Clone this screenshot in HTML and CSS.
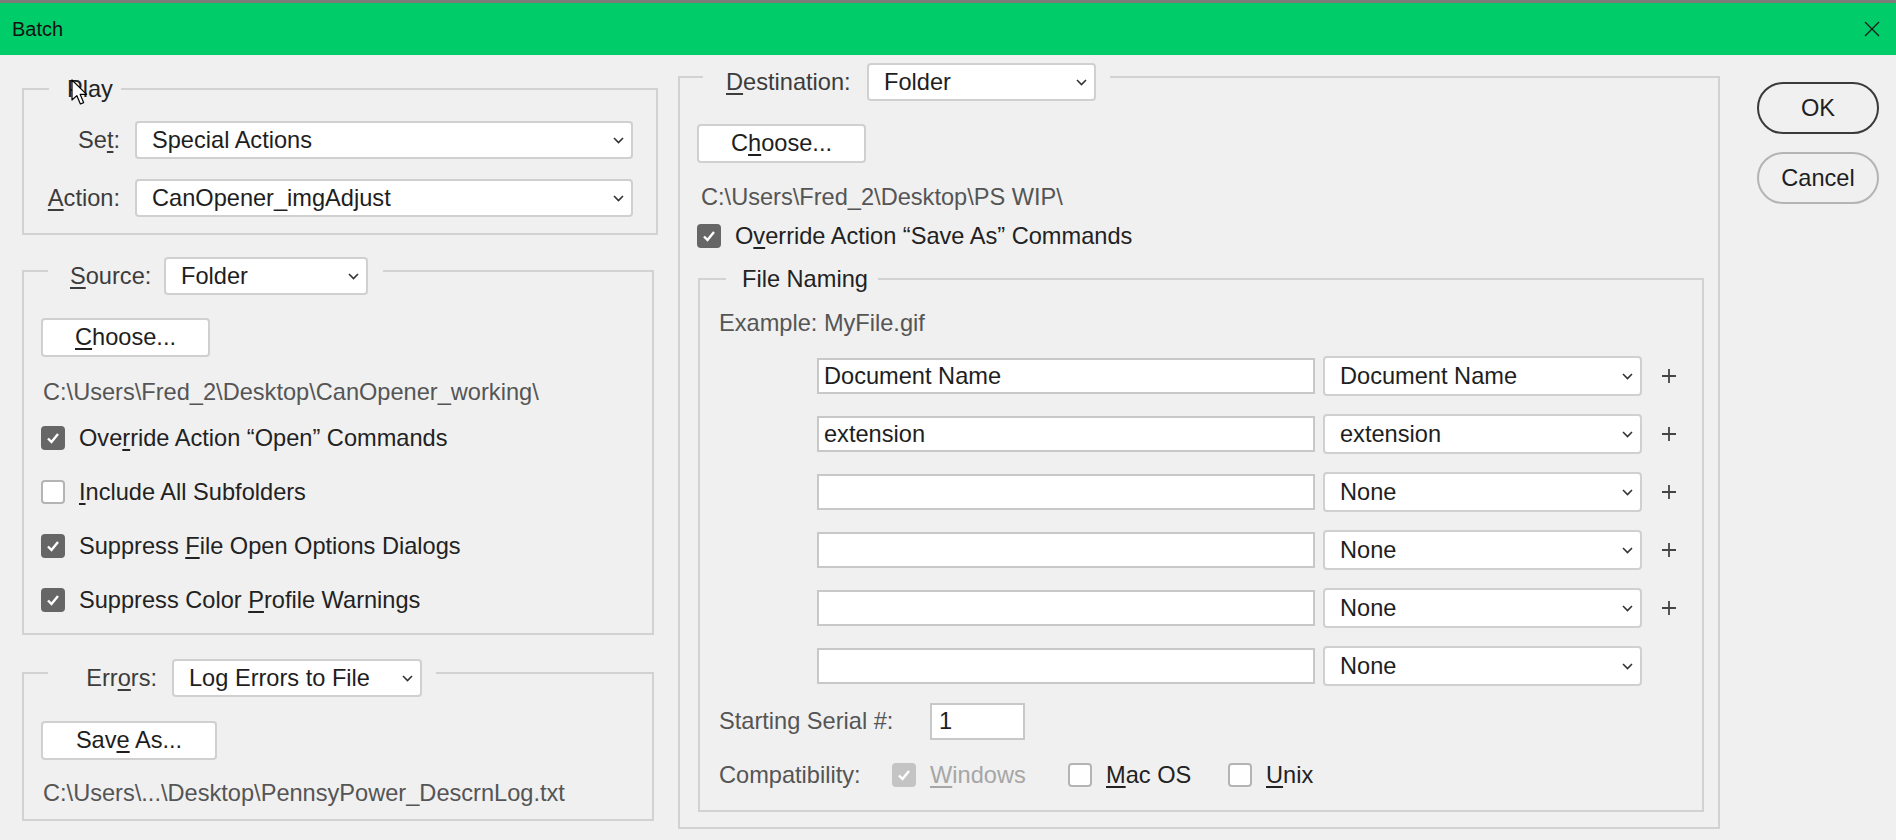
FILE: index.html
```html
<!DOCTYPE html>
<html>
<head>
<meta charset="utf-8">
<title>Batch</title>
<link rel="stylesheet" href="styles.css">
</head>
<body>
<div class="topstrip"></div>
<div class="titlebar">
  <span class="title">Batch</span>
  <svg class="close" width="16" height="16" viewBox="0 0 16 16"><path d="M1 1 L15 15 M15 1 L1 15" stroke="#1a1a1a" stroke-width="1.3" fill="none"/></svg>
</div>
<div class="main">
  <div class="col-left">
    <div class="group play">
      <div class="legend legend-text play-legend">Play</div>
      <div class="form-grid">
        <span class="lbl">Se<u>t</u>:</span>
        <div class="select w-set"><span>Special Actions</span><svg class="chev" width="11" height="7" viewBox="0 0 11 7"><polyline points="1,1 5.5,5.5 10,1" fill="none" stroke="#333" stroke-width="1.6"/></svg></div>
        <span class="lbl"><u>A</u>ction:</span>
        <div class="select w-set"><span>CanOpener_imgAdjust</span><svg class="chev" width="11" height="7" viewBox="0 0 11 7"><polyline points="1,1 5.5,5.5 10,1" fill="none" stroke="#333" stroke-width="1.6"/></svg></div>
      </div>
    </div>

    <div class="group source">
      <div class="legend legend-ctl source-legend">
        <span class="lbl lbl-source"><u>S</u>ource:</span>
        <div class="select w-source"><span>Folder</span><svg class="chev" width="11" height="7" viewBox="0 0 11 7"><polyline points="1,1 5.5,5.5 10,1" fill="none" stroke="#333" stroke-width="1.6"/></svg></div>
      </div>
      <div class="btn w-choose src-choose"><span><u>C</u>hoose...</span></div>
      <div class="path src-path">C:\Users\Fred_2\Desktop\CanOpener_working\</div>
      <div class="check-list">
        <div class="check-row"><span class="cb on"><svg width="14" height="12" viewBox="0 0 14 12"><polyline points="2,6.5 5.5,10 12,2" fill="none" stroke="#fff" stroke-width="2.4"/></svg></span><span class="ctext">Ove<u>r</u>ride Action “Open” Commands</span></div>
        <div class="check-row"><span class="cb off"></span><span class="ctext"><u>I</u>nclude All Subfolders</span></div>
        <div class="check-row"><span class="cb on"><svg width="14" height="12" viewBox="0 0 14 12"><polyline points="2,6.5 5.5,10 12,2" fill="none" stroke="#fff" stroke-width="2.4"/></svg></span><span class="ctext">Suppress <u>F</u>ile Open Options Dialogs</span></div>
        <div class="check-row"><span class="cb on"><svg width="14" height="12" viewBox="0 0 14 12"><polyline points="2,6.5 5.5,10 12,2" fill="none" stroke="#fff" stroke-width="2.4"/></svg></span><span class="ctext">Suppress Color <u>P</u>rofile Warnings</span></div>
      </div>
    </div>

    <div class="group errors">
      <div class="legend legend-ctl errors-legend">
        <span class="lbl lbl-errors">Err<u>o</u>rs:</span>
        <div class="select w-errors"><span>Log Errors to File</span><svg class="chev" width="11" height="7" viewBox="0 0 11 7"><polyline points="1,1 5.5,5.5 10,1" fill="none" stroke="#333" stroke-width="1.6"/></svg></div>
      </div>
      <div class="btn w-saveas err-save"><span>Sav<u>e</u> As...</span></div>
      <div class="path err-path">C:\Users\...\Desktop\PennsyPower_DescrnLog.txt</div>
    </div>
  </div>

  <div class="col-right">
    <div class="group dest">
      <div class="legend legend-ctl dest-legend">
        <span class="lbl lbl-dest"><u>D</u>estination:</span>
        <div class="select w-dest"><span>Folder</span><svg class="chev" width="11" height="7" viewBox="0 0 11 7"><polyline points="1,1 5.5,5.5 10,1" fill="none" stroke="#333" stroke-width="1.6"/></svg></div>
      </div>
      <div class="btn w-choose dest-choose"><span>C<u>h</u>oose...</span></div>
      <div class="path dest-path">C:\Users\Fred_2\Desktop\PS WIP\</div>
      <div class="check-row dest-check"><span class="cb on"><svg width="14" height="12" viewBox="0 0 14 12"><polyline points="2,6.5 5.5,10 12,2" fill="none" stroke="#fff" stroke-width="2.4"/></svg></span><span class="ctext">O<u>v</u>erride Action “Save As” Commands</span></div>

      <div class="group naming">
        <div class="legend legend-text naming-legend">File Naming</div>
        <div class="example">Example: MyFile.gif</div>
        <div class="name-rows">
          <div class="name-row">
            <div class="tinput">Document Name</div>
            <div class="select w-name"><span>Document Name</span><svg class="chev" width="11" height="7" viewBox="0 0 11 7"><polyline points="1,1 5.5,5.5 10,1" fill="none" stroke="#333" stroke-width="1.6"/></svg></div>
            <svg class="plus" width="16" height="16" viewBox="0 0 16 16"><path d="M8 1 V15 M1 8 H15" stroke="#444" stroke-width="1.8"/></svg>
          </div>
          <div class="name-row">
            <div class="tinput">extension</div>
            <div class="select w-name"><span>extension</span><svg class="chev" width="11" height="7" viewBox="0 0 11 7"><polyline points="1,1 5.5,5.5 10,1" fill="none" stroke="#333" stroke-width="1.6"/></svg></div>
            <svg class="plus" width="16" height="16" viewBox="0 0 16 16"><path d="M8 1 V15 M1 8 H15" stroke="#444" stroke-width="1.8"/></svg>
          </div>
          <div class="name-row">
            <div class="tinput"></div>
            <div class="select w-name"><span>None</span><svg class="chev" width="11" height="7" viewBox="0 0 11 7"><polyline points="1,1 5.5,5.5 10,1" fill="none" stroke="#333" stroke-width="1.6"/></svg></div>
            <svg class="plus" width="16" height="16" viewBox="0 0 16 16"><path d="M8 1 V15 M1 8 H15" stroke="#444" stroke-width="1.8"/></svg>
          </div>
          <div class="name-row">
            <div class="tinput"></div>
            <div class="select w-name"><span>None</span><svg class="chev" width="11" height="7" viewBox="0 0 11 7"><polyline points="1,1 5.5,5.5 10,1" fill="none" stroke="#333" stroke-width="1.6"/></svg></div>
            <svg class="plus" width="16" height="16" viewBox="0 0 16 16"><path d="M8 1 V15 M1 8 H15" stroke="#444" stroke-width="1.8"/></svg>
          </div>
          <div class="name-row">
            <div class="tinput"></div>
            <div class="select w-name"><span>None</span><svg class="chev" width="11" height="7" viewBox="0 0 11 7"><polyline points="1,1 5.5,5.5 10,1" fill="none" stroke="#333" stroke-width="1.6"/></svg></div>
            <svg class="plus" width="16" height="16" viewBox="0 0 16 16"><path d="M8 1 V15 M1 8 H15" stroke="#444" stroke-width="1.8"/></svg>
          </div>
          <div class="name-row">
            <div class="tinput"></div>
            <div class="select w-name"><span>None</span><svg class="chev" width="11" height="7" viewBox="0 0 11 7"><polyline points="1,1 5.5,5.5 10,1" fill="none" stroke="#333" stroke-width="1.6"/></svg></div>
          </div>
        </div>
        <div class="serial-row">
          <span class="glabel serial-label">Starting Serial #:</span>
          <div class="tinput serial-input">1</div>
        </div>
        <div class="compat-row">
          <span class="glabel compat-label">Compatibility:</span>
          <div class="opt opt-win"><span class="cb dis"><svg width="14" height="12" viewBox="0 0 14 12"><polyline points="2,6.5 5.5,10 12,2" fill="none" stroke="#fff" stroke-width="2.4"/></svg></span><span class="ctext disabled"><u>W</u>indows</span></div>
          <div class="opt opt-mac"><span class="cb off"></span><span class="ctext"><u>M</u>ac OS</span></div>
          <div class="opt"><span class="cb off"></span><span class="ctext"><u>U</u>nix</span></div>
        </div>
      </div>
    </div>
  </div>

  <div class="col-buttons">
    <div class="pill ok">OK</div>
    <div class="pill cancel">Cancel</div>
  </div>
</div>
<svg class="cursor" width="18" height="27" viewBox="0 0 18 27"><path d="M1 1 L1 21 L5.8 16.6 L9.4 25 L12.6 23.6 L9.2 15.4 L15.6 15.4 Z" fill="#fff" stroke="#000" stroke-width="1.2" stroke-linejoin="round"/></svg>
</body>
</html>
```

FILE: styles.css
```css
* { box-sizing: border-box; }
html, body {
  margin: 0;
  padding: 0;
}
body {
  width: 1896px;
  height: 840px;
  overflow: hidden;
  background: #f0f0f0;
  font-family: "Liberation Sans", Arial, sans-serif;
  font-size: 23.6px;
  color: #1e1e1e;
  position: relative;
}
u {
  text-decoration-thickness: 1.5px;
  text-underline-offset: 3px;
}
.topstrip {
  height: 3px;
  background: #7b7b7b;
}
.titlebar {
  height: 52px;
  background: #00cc6a;
  display: flex;
  align-items: center;
  padding-left: 12px;
  padding-right: 16px;
}
.title {
  font-size: 20px;
  color: #111;
  flex: 1;
}
.close { display: block; }

.main {
  display: flex;
  align-items: flex-start;
  padding-left: 22px;
}
.col-left {
  width: 636px;
  padding-top: 33px;
}
.col-right {
  width: 1042px;
  margin-left: 20px;
  padding-top: 21px;
}
.col-buttons {
  margin-left: 37px;
  padding-top: 27px;
  display: flex;
  flex-direction: column;
  gap: 18px;
}

/* group boxes */
.group {
  border: 2px solid #d2d2d2;
}
.legend {
  display: flex;
  align-items: center;
  width: max-content;
  background: #f0f0f0;
}
.legend-text {
  height: 30px;
  line-height: 30px;
  margin-top: -16px;
}
.legend-ctl {
  height: 38px;
  margin-top: -15px;
}
.lbl {
  color: #3c3c3c;
  white-space: nowrap;
}
.play { width: 636px; }
.play-legend {
  margin-left: 25px;
  padding: 0 8px 0 18px;
  color: #222;
}
.form-grid {
  display: grid;
  grid-template-columns: 96px 498px;
  column-gap: 15px;
  row-gap: 20px;
  margin-top: 17px;
  padding-bottom: 16px;
}
.form-grid .lbl {
  text-align: right;
  line-height: 38px;
}

.source {
  width: 632px;
  margin-top: 35px;
  padding-left: 17px;
  padding-bottom: 6px;
}
.source-legend {
  margin-left: 7px;
  padding: 0 15px 0 22px;
}
.lbl-source { width: 79px; text-align: right; margin-right: 15px; }

.errors {
  width: 632px;
  margin-top: 37px;
  padding-left: 17px;
  padding-bottom: 11px;
}
.errors-legend {
  margin-left: 7px;
  padding: 0 14px 0 37px;
}
.lbl-errors { width: 72px; text-align: right; margin-right: 15px; }

/* select */
.select {
  height: 38px;
  background: #fff;
  border: 2px solid #d0d0d0;
  border-radius: 4px;
  display: flex;
  align-items: center;
  padding-left: 15px;
  padding-right: 7px;
  white-space: nowrap;
  color: #1e1e1e;
}
.select span { flex: 1; }
.chev { display: block; flex: none; }
.w-set { width: 498px; }
.w-source { width: 204px; }
.w-errors { width: 250px; }
.w-dest { width: 229px; }
.w-name { width: 319px; height: 40px; }

/* buttons */
.btn {
  height: 39px;
  background: #fff;
  border: 2px solid #d0d0d0;
  border-radius: 4px;
  display: flex;
  align-items: center;
  justify-content: center;
  color: #1e1e1e;
  white-space: nowrap;
}
.w-choose { width: 169px; }
.w-saveas { width: 176px; }
.src-choose { margin-top: 23px; }
.err-save { margin-top: 24px; }

.path {
  height: 30px;
  line-height: 30px;
  color: #555;
  padding-left: 2px;
  white-space: nowrap;
}
.src-path { margin-top: 20px; }
.err-path { margin-top: 18px; }

.check-list { margin-top: 4px; }
.check-row {
  height: 54px;
  display: flex;
  align-items: center;
  gap: 14px;
}
.cb {
  width: 24px;
  height: 24px;
  border-radius: 4px;
  flex: none;
  display: flex;
  align-items: center;
  justify-content: center;
}
.cb.on { background: #666; }
.cb.off { background: #fff; border: 2px solid #b4b4b4; }
.cb.dis { background: #c4c4c4; }
.ctext { white-space: nowrap; color: #222; }
.ctext.disabled { color: #a6a6a6; }

/* destination */
.dest {
  width: 1042px;
  padding-bottom: 15px;
}
.dest-legend {
  margin-left: 23px;
  padding: 0 14px 0 23px;
}
.lbl-dest { width: 127px; margin-right: 14px; }
.dest-choose { margin-top: 23px; margin-left: 17px; }
.dest-path { margin-top: 19px; margin-left: 19px; }
.dest-check {
  height: 30px;
  margin-top: 9px;
  margin-left: 17px;
}

.naming {
  width: 1006px;
  margin-top: 27px;
  margin-left: 18px;
  padding-left: 19px;
  padding-bottom: 20px;
}
.naming-legend {
  margin-left: 7px;
  padding: 0 10px 0 16px;
  color: #222;
}
.example {
  margin-top: 14px;
  height: 30px;
  line-height: 30px;
  color: #555;
}
.glabel { color: #555; white-space: nowrap; }
.name-rows {
  margin-top: 18px;
  margin-left: 98px;
  display: flex;
  flex-direction: column;
  gap: 18px;
}
.name-row {
  height: 40px;
  display: flex;
  align-items: center;
}
.tinput {
  width: 498px;
  height: 36px;
  background: #fff;
  border: 2px solid #c8c8c8;
  padding-left: 5px;
  line-height: 32px;
  white-space: nowrap;
  color: #1e1e1e;
  margin-right: 8px;
}
.plus {
  display: block;
  margin-left: 19px;
  width: 16px;
  height: 16px;
}
.serial-row {
  margin-top: 17px;
  height: 37px;
  display: flex;
  align-items: center;
}
.serial-label { width: 211px; }
.serial-input {
  width: 95px;
  height: 37px;
  line-height: 33px;
  padding-left: 7px;
  margin-right: 0;
}
.compat-row {
  margin-top: 20px;
  height: 30px;
  display: flex;
  align-items: center;
}
.compat-label { width: 173px; }
.opt {
  display: flex;
  align-items: center;
  gap: 14px;
}
.opt-win { width: 176px; }
.opt-mac { width: 160px; }

/* OK / Cancel */
.pill {
  width: 122px;
  height: 52px;
  border-radius: 26px;
  display: flex;
  align-items: center;
  justify-content: center;
  color: #1e1e1e;
  background: #f0f0f0;
}
.ok { border: 2px solid #3a3a3a; }
.cancel { border: 2px solid #b4b4b4; }

.cursor {
  position: absolute;
  left: 71px;
  top: 79px;
}
```
